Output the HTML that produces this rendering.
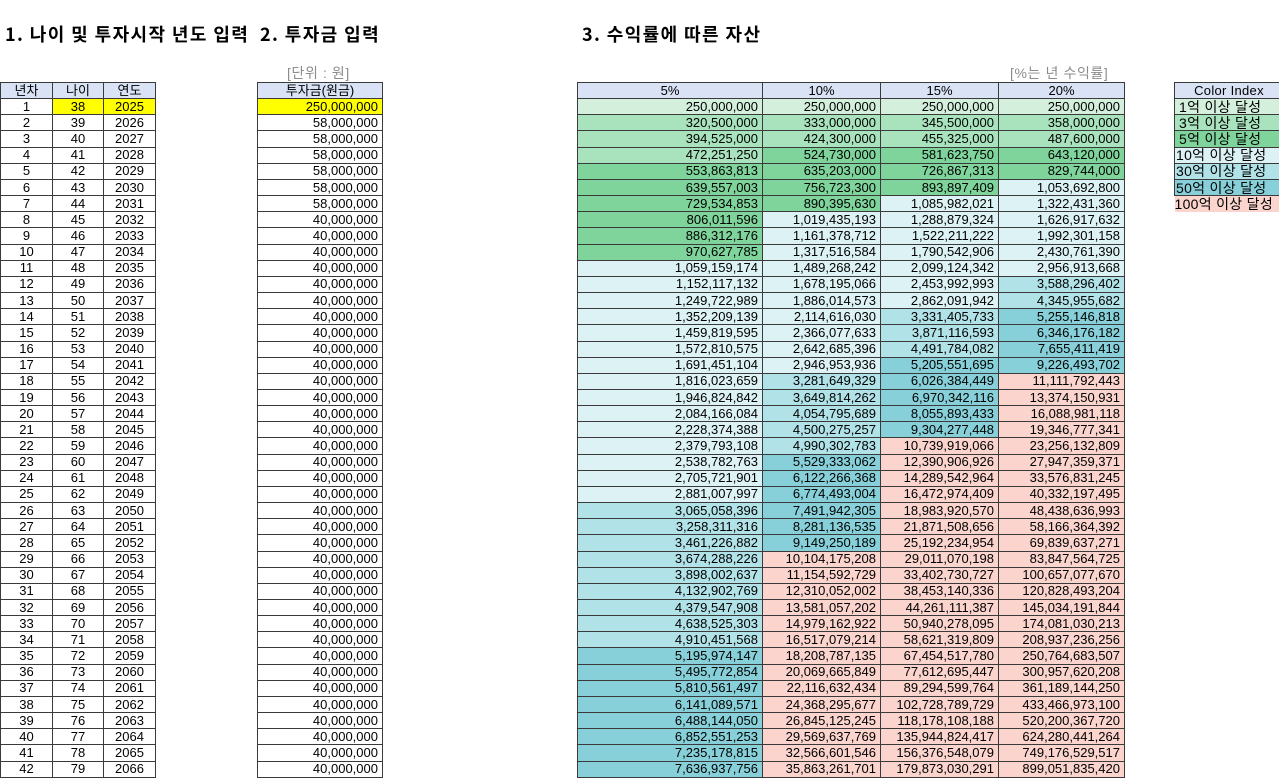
<!DOCTYPE html>
<html><head><meta charset="utf-8"><style>
body{margin:0;width:1279px;height:778px;background:#fff;position:relative;overflow:hidden;font-family:"Liberation Sans","Noto Sans CJK KR",sans-serif;}
.t{position:absolute;font-weight:bold;font-size:18px;letter-spacing:1.4px;top:21px;white-space:nowrap;font-family:"Noto Sans CJK KR","Liberation Sans",sans-serif;}
.n{position:absolute;font-size:14px;letter-spacing:0.6px;color:#8c8c8c;top:63px;white-space:nowrap;font-family:"Liberation Sans","Noto Sans CJK KR",sans-serif;}
table{position:absolute;border-collapse:collapse;table-layout:fixed;font-size:13px;}
td{border:1px solid #3a3a3a;height:16.17px;padding:0 4px;line-height:14px;white-space:nowrap;overflow:hidden;box-sizing:border-box}
td.r{text-align:right}
td.c{text-align:center}
.h td{background:#d9e3f5;text-align:center}
.y{background:#ffff00}
.c1{background:#d4f0dd}.c2{background:#a9e3bd}.c3{background:#7ed49b}
.c4{background:#ddf2f5}.c5{background:#b1e2e8}.c6{background:#87d0d9}.c7{background:#fad4cd}
.ci td{font-size:14px;letter-spacing:0.3px}
</style></head><body>
<div class="t" style="left:5px">1. 나이 및 투자시작 년도 입력</div>
<div class="t" style="left:260px">2. 투자금 입력</div>
<div class="t" style="left:582px">3. 수익률에 따른 자산</div>
<div class="n" style="left:287px">[단위 : 원]</div>
<div class="n" style="left:1010px">[%는 년 수익률]</div>

<table style="left:0;top:82px;width:155px">
<colgroup><col style="width:52px"><col style="width:51px"><col style="width:52px"></colgroup>
<tr class="h"><td>년차</td><td>나이</td><td>연도</td></tr>
<tr><td class="c">1</td><td class="c y">38</td><td class="c y">2025</td></tr>
<tr><td class="c">2</td><td class="c">39</td><td class="c">2026</td></tr>
<tr><td class="c">3</td><td class="c">40</td><td class="c">2027</td></tr>
<tr><td class="c">4</td><td class="c">41</td><td class="c">2028</td></tr>
<tr><td class="c">5</td><td class="c">42</td><td class="c">2029</td></tr>
<tr><td class="c">6</td><td class="c">43</td><td class="c">2030</td></tr>
<tr><td class="c">7</td><td class="c">44</td><td class="c">2031</td></tr>
<tr><td class="c">8</td><td class="c">45</td><td class="c">2032</td></tr>
<tr><td class="c">9</td><td class="c">46</td><td class="c">2033</td></tr>
<tr><td class="c">10</td><td class="c">47</td><td class="c">2034</td></tr>
<tr><td class="c">11</td><td class="c">48</td><td class="c">2035</td></tr>
<tr><td class="c">12</td><td class="c">49</td><td class="c">2036</td></tr>
<tr><td class="c">13</td><td class="c">50</td><td class="c">2037</td></tr>
<tr><td class="c">14</td><td class="c">51</td><td class="c">2038</td></tr>
<tr><td class="c">15</td><td class="c">52</td><td class="c">2039</td></tr>
<tr><td class="c">16</td><td class="c">53</td><td class="c">2040</td></tr>
<tr><td class="c">17</td><td class="c">54</td><td class="c">2041</td></tr>
<tr><td class="c">18</td><td class="c">55</td><td class="c">2042</td></tr>
<tr><td class="c">19</td><td class="c">56</td><td class="c">2043</td></tr>
<tr><td class="c">20</td><td class="c">57</td><td class="c">2044</td></tr>
<tr><td class="c">21</td><td class="c">58</td><td class="c">2045</td></tr>
<tr><td class="c">22</td><td class="c">59</td><td class="c">2046</td></tr>
<tr><td class="c">23</td><td class="c">60</td><td class="c">2047</td></tr>
<tr><td class="c">24</td><td class="c">61</td><td class="c">2048</td></tr>
<tr><td class="c">25</td><td class="c">62</td><td class="c">2049</td></tr>
<tr><td class="c">26</td><td class="c">63</td><td class="c">2050</td></tr>
<tr><td class="c">27</td><td class="c">64</td><td class="c">2051</td></tr>
<tr><td class="c">28</td><td class="c">65</td><td class="c">2052</td></tr>
<tr><td class="c">29</td><td class="c">66</td><td class="c">2053</td></tr>
<tr><td class="c">30</td><td class="c">67</td><td class="c">2054</td></tr>
<tr><td class="c">31</td><td class="c">68</td><td class="c">2055</td></tr>
<tr><td class="c">32</td><td class="c">69</td><td class="c">2056</td></tr>
<tr><td class="c">33</td><td class="c">70</td><td class="c">2057</td></tr>
<tr><td class="c">34</td><td class="c">71</td><td class="c">2058</td></tr>
<tr><td class="c">35</td><td class="c">72</td><td class="c">2059</td></tr>
<tr><td class="c">36</td><td class="c">73</td><td class="c">2060</td></tr>
<tr><td class="c">37</td><td class="c">74</td><td class="c">2061</td></tr>
<tr><td class="c">38</td><td class="c">75</td><td class="c">2062</td></tr>
<tr><td class="c">39</td><td class="c">76</td><td class="c">2063</td></tr>
<tr><td class="c">40</td><td class="c">77</td><td class="c">2064</td></tr>
<tr><td class="c">41</td><td class="c">78</td><td class="c">2065</td></tr>
<tr><td class="c">42</td><td class="c">79</td><td class="c">2066</td></tr>
</table>

<table style="left:257px;top:82px;width:126px">
<tr class="h"><td>투자금(원금)</td></tr>
<tr><td class="r y">250,000,000</td></tr>
<tr><td class="r">58,000,000</td></tr><tr><td class="r">58,000,000</td></tr><tr><td class="r">58,000,000</td></tr><tr><td class="r">58,000,000</td></tr><tr><td class="r">58,000,000</td></tr><tr><td class="r">58,000,000</td></tr>
<tr><td class="r">40,000,000</td></tr><tr><td class="r">40,000,000</td></tr><tr><td class="r">40,000,000</td></tr><tr><td class="r">40,000,000</td></tr><tr><td class="r">40,000,000</td></tr><tr><td class="r">40,000,000</td></tr><tr><td class="r">40,000,000</td></tr><tr><td class="r">40,000,000</td></tr><tr><td class="r">40,000,000</td></tr><tr><td class="r">40,000,000</td></tr><tr><td class="r">40,000,000</td></tr><tr><td class="r">40,000,000</td></tr><tr><td class="r">40,000,000</td></tr><tr><td class="r">40,000,000</td></tr><tr><td class="r">40,000,000</td></tr><tr><td class="r">40,000,000</td></tr><tr><td class="r">40,000,000</td></tr><tr><td class="r">40,000,000</td></tr><tr><td class="r">40,000,000</td></tr><tr><td class="r">40,000,000</td></tr><tr><td class="r">40,000,000</td></tr><tr><td class="r">40,000,000</td></tr><tr><td class="r">40,000,000</td></tr><tr><td class="r">40,000,000</td></tr><tr><td class="r">40,000,000</td></tr><tr><td class="r">40,000,000</td></tr><tr><td class="r">40,000,000</td></tr><tr><td class="r">40,000,000</td></tr><tr><td class="r">40,000,000</td></tr><tr><td class="r">40,000,000</td></tr><tr><td class="r">40,000,000</td></tr><tr><td class="r">40,000,000</td></tr><tr><td class="r">40,000,000</td></tr><tr><td class="r">40,000,000</td></tr><tr><td class="r">40,000,000</td></tr>
</table>

<table style="left:577px;top:82px;width:547px">
<colgroup><col style="width:185px"><col style="width:118px"><col style="width:118px"><col style="width:126px"></colgroup>
<tr class="h"><td>5%</td><td>10%</td><td>15%</td><td>20%</td></tr>
<tr><td class="r c1">250,000,000</td><td class="r c1">250,000,000</td><td class="r c1">250,000,000</td><td class="r c1">250,000,000</td></tr>
<tr><td class="r c2">320,500,000</td><td class="r c2">333,000,000</td><td class="r c2">345,500,000</td><td class="r c2">358,000,000</td></tr>
<tr><td class="r c2">394,525,000</td><td class="r c2">424,300,000</td><td class="r c2">455,325,000</td><td class="r c2">487,600,000</td></tr>
<tr><td class="r c2">472,251,250</td><td class="r c3">524,730,000</td><td class="r c3">581,623,750</td><td class="r c3">643,120,000</td></tr>
<tr><td class="r c3">553,863,813</td><td class="r c3">635,203,000</td><td class="r c3">726,867,313</td><td class="r c3">829,744,000</td></tr>
<tr><td class="r c3">639,557,003</td><td class="r c3">756,723,300</td><td class="r c3">893,897,409</td><td class="r c4">1,053,692,800</td></tr>
<tr><td class="r c3">729,534,853</td><td class="r c3">890,395,630</td><td class="r c4">1,085,982,021</td><td class="r c4">1,322,431,360</td></tr>
<tr><td class="r c3">806,011,596</td><td class="r c4">1,019,435,193</td><td class="r c4">1,288,879,324</td><td class="r c4">1,626,917,632</td></tr>
<tr><td class="r c3">886,312,176</td><td class="r c4">1,161,378,712</td><td class="r c4">1,522,211,222</td><td class="r c4">1,992,301,158</td></tr>
<tr><td class="r c3">970,627,785</td><td class="r c4">1,317,516,584</td><td class="r c4">1,790,542,906</td><td class="r c4">2,430,761,390</td></tr>
<tr><td class="r c4">1,059,159,174</td><td class="r c4">1,489,268,242</td><td class="r c4">2,099,124,342</td><td class="r c4">2,956,913,668</td></tr>
<tr><td class="r c4">1,152,117,132</td><td class="r c4">1,678,195,066</td><td class="r c4">2,453,992,993</td><td class="r c5">3,588,296,402</td></tr>
<tr><td class="r c4">1,249,722,989</td><td class="r c4">1,886,014,573</td><td class="r c4">2,862,091,942</td><td class="r c5">4,345,955,682</td></tr>
<tr><td class="r c4">1,352,209,139</td><td class="r c4">2,114,616,030</td><td class="r c5">3,331,405,733</td><td class="r c6">5,255,146,818</td></tr>
<tr><td class="r c4">1,459,819,595</td><td class="r c4">2,366,077,633</td><td class="r c5">3,871,116,593</td><td class="r c6">6,346,176,182</td></tr>
<tr><td class="r c4">1,572,810,575</td><td class="r c4">2,642,685,396</td><td class="r c5">4,491,784,082</td><td class="r c6">7,655,411,419</td></tr>
<tr><td class="r c4">1,691,451,104</td><td class="r c4">2,946,953,936</td><td class="r c6">5,205,551,695</td><td class="r c6">9,226,493,702</td></tr>
<tr><td class="r c4">1,816,023,659</td><td class="r c5">3,281,649,329</td><td class="r c6">6,026,384,449</td><td class="r c7">11,111,792,443</td></tr>
<tr><td class="r c4">1,946,824,842</td><td class="r c5">3,649,814,262</td><td class="r c6">6,970,342,116</td><td class="r c7">13,374,150,931</td></tr>
<tr><td class="r c4">2,084,166,084</td><td class="r c5">4,054,795,689</td><td class="r c6">8,055,893,433</td><td class="r c7">16,088,981,118</td></tr>
<tr><td class="r c4">2,228,374,388</td><td class="r c5">4,500,275,257</td><td class="r c6">9,304,277,448</td><td class="r c7">19,346,777,341</td></tr>
<tr><td class="r c4">2,379,793,108</td><td class="r c5">4,990,302,783</td><td class="r c7">10,739,919,066</td><td class="r c7">23,256,132,809</td></tr>
<tr><td class="r c4">2,538,782,763</td><td class="r c6">5,529,333,062</td><td class="r c7">12,390,906,926</td><td class="r c7">27,947,359,371</td></tr>
<tr><td class="r c4">2,705,721,901</td><td class="r c6">6,122,266,368</td><td class="r c7">14,289,542,964</td><td class="r c7">33,576,831,245</td></tr>
<tr><td class="r c4">2,881,007,997</td><td class="r c6">6,774,493,004</td><td class="r c7">16,472,974,409</td><td class="r c7">40,332,197,495</td></tr>
<tr><td class="r c5">3,065,058,396</td><td class="r c6">7,491,942,305</td><td class="r c7">18,983,920,570</td><td class="r c7">48,438,636,993</td></tr>
<tr><td class="r c5">3,258,311,316</td><td class="r c6">8,281,136,535</td><td class="r c7">21,871,508,656</td><td class="r c7">58,166,364,392</td></tr>
<tr><td class="r c5">3,461,226,882</td><td class="r c6">9,149,250,189</td><td class="r c7">25,192,234,954</td><td class="r c7">69,839,637,271</td></tr>
<tr><td class="r c5">3,674,288,226</td><td class="r c7">10,104,175,208</td><td class="r c7">29,011,070,198</td><td class="r c7">83,847,564,725</td></tr>
<tr><td class="r c5">3,898,002,637</td><td class="r c7">11,154,592,729</td><td class="r c7">33,402,730,727</td><td class="r c7">100,657,077,670</td></tr>
<tr><td class="r c5">4,132,902,769</td><td class="r c7">12,310,052,002</td><td class="r c7">38,453,140,336</td><td class="r c7">120,828,493,204</td></tr>
<tr><td class="r c5">4,379,547,908</td><td class="r c7">13,581,057,202</td><td class="r c7">44,261,111,387</td><td class="r c7">145,034,191,844</td></tr>
<tr><td class="r c5">4,638,525,303</td><td class="r c7">14,979,162,922</td><td class="r c7">50,940,278,095</td><td class="r c7">174,081,030,213</td></tr>
<tr><td class="r c5">4,910,451,568</td><td class="r c7">16,517,079,214</td><td class="r c7">58,621,319,809</td><td class="r c7">208,937,236,256</td></tr>
<tr><td class="r c6">5,195,974,147</td><td class="r c7">18,208,787,135</td><td class="r c7">67,454,517,780</td><td class="r c7">250,764,683,507</td></tr>
<tr><td class="r c6">5,495,772,854</td><td class="r c7">20,069,665,849</td><td class="r c7">77,612,695,447</td><td class="r c7">300,957,620,208</td></tr>
<tr><td class="r c6">5,810,561,497</td><td class="r c7">22,116,632,434</td><td class="r c7">89,294,599,764</td><td class="r c7">361,189,144,250</td></tr>
<tr><td class="r c6">6,141,089,571</td><td class="r c7">24,368,295,677</td><td class="r c7">102,728,789,729</td><td class="r c7">433,466,973,100</td></tr>
<tr><td class="r c6">6,488,144,050</td><td class="r c7">26,845,125,245</td><td class="r c7">118,178,108,188</td><td class="r c7">520,200,367,720</td></tr>
<tr><td class="r c6">6,852,551,253</td><td class="r c7">29,569,637,769</td><td class="r c7">135,944,824,417</td><td class="r c7">624,280,441,264</td></tr>
<tr><td class="r c6">7,235,178,815</td><td class="r c7">32,566,601,546</td><td class="r c7">156,376,548,079</td><td class="r c7">749,176,529,517</td></tr>
<tr><td class="r c6">7,636,937,756</td><td class="r c7">35,863,261,701</td><td class="r c7">179,873,030,291</td><td class="r c7">899,051,835,420</td></tr>
</table>

<table class="ci" style="left:1174px;top:82px;width:110px">
<tr class="h"><td style="font-size:13px">Color Index</td></tr>
<tr><td class="c1" style="padding-left:4px">1억 이상 달성</td></tr>
<tr><td class="c2" style="padding-left:4px">3억 이상 달성</td></tr>
<tr><td class="c3" style="padding-left:4px">5억 이상 달성</td></tr>
<tr><td class="c4" style="padding-left:1px">10억 이상 달성</td></tr>
<tr><td class="c5" style="padding-left:1px">30억 이상 달성</td></tr>
<tr><td class="c6" style="padding-left:1px">50억 이상 달성</td></tr>
<tr><td class="c7" style="padding-left:0;border:none">100억 이상 달성</td></tr>
</table>
</body></html>
